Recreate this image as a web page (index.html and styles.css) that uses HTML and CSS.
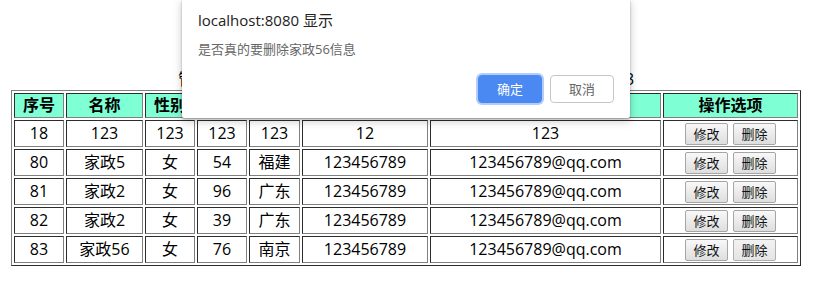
FILE: index.html
```html
<!DOCTYPE html>
<html lang="zh">
<head>
<meta charset="utf-8">
<title>家政信息管理</title>
<link rel="stylesheet" href="styles.css">
</head>
<body>
<div class="page">
  <table class="grid">
    <caption class="caption">管理全部家政人员信息（5条），当前时间：2019-11-22 10:35:23</caption>
    <thead>
      <tr class="head">
        <th class="w-id">序号</th>
        <th class="w-name">名称</th>
        <th class="w-sex">性别</th>
        <th class="w-age">年龄</th>
        <th class="w-addr">地址</th>
        <th class="w-tel">电话</th>
        <th class="w-mail">邮箱</th>
        <th class="w-op">操作选项</th>
      </tr>
    </thead>
    <tbody>
      <tr class="row">
        <td>18</td><td>123</td><td>123</td><td>123</td><td>123</td><td>12</td><td>123</td>
        <td><div class="ops"><button class="btn">修改</button><button class="btn">删除</button></div></td>
      </tr>
      <tr class="row">
        <td>80</td><td>家政5</td><td>女</td><td>54</td><td>福建</td><td>123456789</td><td>123456789@qq.com</td>
        <td><div class="ops"><button class="btn">修改</button><button class="btn">删除</button></div></td>
      </tr>
      <tr class="row">
        <td>81</td><td>家政2</td><td>女</td><td>96</td><td>广东</td><td>123456789</td><td>123456789@qq.com</td>
        <td><div class="ops"><button class="btn">修改</button><button class="btn">删除</button></div></td>
      </tr>
      <tr class="row">
        <td>82</td><td>家政2</td><td>女</td><td>39</td><td>广东</td><td>123456789</td><td>123456789@qq.com</td>
        <td><div class="ops"><button class="btn">修改</button><button class="btn">删除</button></div></td>
      </tr>
      <tr class="row">
        <td>83</td><td>家政56</td><td>女</td><td>76</td><td>南京</td><td>123456789</td><td>123456789@qq.com</td>
        <td><div class="ops"><button class="btn">修改</button><button class="btn btn-hover">删除</button></div></td>
      </tr>
    </tbody>
  </table>
</div>

<div class="dialog" role="alertdialog">
  <div class="dlg-title">localhost:8080 显示</div>
  <div class="dlg-msg">是否真的要删除家政56信息</div>
  <div class="dlg-actions">
    <button class="dbtn dbtn-ok">确定</button>
    <button class="dbtn dbtn-cancel">取消</button>
  </div>
</div>
</body>
</html>
```

FILE: styles.css
```css
html, body {
  margin: 0;
  padding: 0;
  background: #fff;
}

body {
  font-family: "Open Sans", "Noto Sans CJK SC", sans-serif;
  font-size: 16px;
  color: #000;
  width: 820px;
  height: 290px;
  overflow: hidden;
}

.page {
  padding: 69px 0 0 11px;
}

.grid {
  table-layout: fixed;
  width: 790px;
  border-collapse: separate;
  border-spacing: 2px;
  border: 1px outset gray;
}

.caption {
  line-height: 21px;
  font-size: 16px;
  text-align: center;
  white-space: nowrap;
}

.grid th,
.grid td {
  border: 1px inset gray;
  padding: 1px;
  text-align: center;
  vertical-align: middle;
  line-height: 21px;
  white-space: nowrap;
}

.grid th {
  background: #7fffd4;
  font-weight: bold;
}

.w-id { width: 46px; }
.w-name { width: 73px; }
.w-sex { width: 46px; }
.w-age { width: 46px; }
.w-addr { width: 47px; }
.w-tel { width: 122px; }
.w-mail { width: 227px; }
.w-op { width: 131px; }

.row {
  height: 27px;
}

.ops {
  display: flex;
  justify-content: center;
  gap: 5px;
}

.btn {
  width: 43px;
  height: 22px;
  padding: 0;
  margin: 0;
  font-family: "Noto Sans CJK SC", sans-serif;
  font-size: 13px;
  line-height: 20px;
  color: #111;
  border: 1px solid #a6a6a6;
  border-radius: 2px;
  background: linear-gradient(#f8f8f8, #dedede);
}

.btn-hover {
  background: linear-gradient(#f2f2f2, #e4e4e4);
  border-color: #b0b0b0;
}

.dialog {
  position: absolute;
  left: 182px;
  top: 0;
  width: 448px;
  height: 118px;
  box-sizing: border-box;
  padding: 10px 16px 0 16px;
  background: #fff;
  border-radius: 0 0 2px 2px;
  box-shadow: 0 1px 2px rgba(0, 0, 0, 0.35), 0 3px 8px 1px rgba(0, 0, 0, 0.18);
  font-family: "Open Sans", "Noto Sans CJK SC", sans-serif;
}

.dlg-title {
  font-size: 15px;
  line-height: 20px;
  color: #222;
}

.dlg-msg {
  margin-top: 10px;
  font-size: 13px;
  line-height: 18px;
  color: #666;
}

.dlg-actions {
  display: flex;
  justify-content: flex-end;
  gap: 8px;
  margin-top: 17px;
}

.dbtn {
  width: 64px;
  height: 28px;
  padding: 0;
  margin: 0;
  border-radius: 4px;
  font-family: "Noto Sans CJK SC", sans-serif;
  font-size: 13px;
  line-height: 26px;
}

.dbtn-ok {
  background: #4a88f2;
  border: 1px solid #4a88f2;
  color: #fff;
  box-shadow: 0 0 0 2px #b3cdf8;
}

.dbtn-cancel {
  background: #fff;
  border: 1px solid #c6c6c6;
  color: #666;
}
```
